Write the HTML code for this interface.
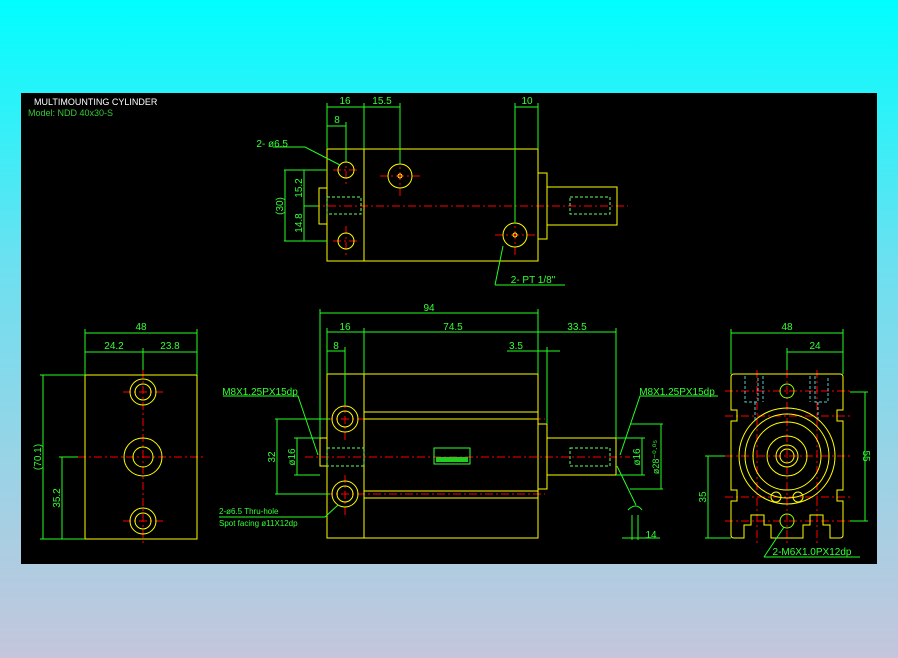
<!DOCTYPE html>
<html><head><style>
html,body{margin:0;padding:0;width:898px;height:658px;overflow:hidden;background:linear-gradient(#00feff 0%,#6ce0f0 40%,#c4c6dc 100%);}
svg{position:absolute;left:0;top:0}
text{font-family:"Liberation Sans",sans-serif;}
</style></head><body>
<svg width="898" height="658" viewBox="0 0 898 658">
<rect x="21" y="93" width="856" height="471" fill="#000"/>
<text x="34" y="105" fill="#fff" font-size="9">MULTIMOUNTING CYLINDER</text>
<text x="28" y="116" fill="#3c3" font-size="9">Model: NDD 40x30-S</text>

<g fill="none" stroke="#ff0000" stroke-width="1" stroke-dasharray="8,3,2,3">
<!-- top view centerlines -->
<line x1="312" y1="206" x2="628" y2="206"/>
<line x1="333" y1="170" x2="360" y2="170"/><line x1="346" y1="155" x2="346" y2="185"/>
<line x1="333" y1="241" x2="360" y2="241"/><line x1="346" y1="226" x2="346" y2="256"/>
<line x1="380" y1="176" x2="420" y2="176"/><line x1="400" y1="156" x2="400" y2="196"/>
<line x1="495" y1="235" x2="535" y2="235"/><line x1="515" y1="215" x2="515" y2="255"/>
<!-- front view -->
<line x1="305" y1="457" x2="630" y2="457"/>
<line x1="325" y1="419" x2="545" y2="419"/><line x1="345" y1="400" x2="345" y2="440"/>
<line x1="325" y1="494" x2="545" y2="494"/><line x1="345" y1="475" x2="345" y2="515"/>
<!-- left view -->
<line x1="78" y1="457" x2="205" y2="457"/><line x1="143" y1="370" x2="143" y2="545"/>
<line x1="123" y1="392" x2="163" y2="392"/><line x1="123" y1="521" x2="163" y2="521"/>
<!-- right view -->
<line x1="725" y1="456" x2="850" y2="456"/><line x1="787" y1="370" x2="787" y2="545"/>
<line x1="725" y1="391" x2="850" y2="391"/><line x1="725" y1="521" x2="850" y2="521"/>
<line x1="725" y1="416" x2="850" y2="416"/><line x1="725" y1="497" x2="850" y2="497"/>
<line x1="757" y1="370" x2="757" y2="545"/><line x1="817" y1="370" x2="817" y2="545"/>
</g>

<g fill="none" stroke="#ffff00" stroke-width="1">
<!-- top view -->
<rect x="327" y="149" width="37" height="112"/>
<rect x="364" y="149" width="174" height="112"/>
<rect x="538" y="173" width="9" height="66"/>
<rect x="547" y="187" width="70" height="38"/>
<rect x="319" y="188" width="8" height="36"/>
<circle cx="346" cy="170" r="8"/><circle cx="346" cy="241" r="8"/>
<circle cx="400" cy="176" r="12"/><circle cx="400" cy="176" r="2"/>
<circle cx="515" cy="235" r="12"/><circle cx="515" cy="235" r="2"/>
<!-- front view -->
<rect x="327" y="374" width="37" height="164"/>
<rect x="364" y="374" width="174" height="164"/>
<rect x="538" y="424" width="9" height="65"/>
<rect x="547" y="438" width="69" height="37"/>
<rect x="320" y="438" width="7" height="28"/>
<line x1="364" y1="412" x2="538" y2="412"/><line x1="364" y1="419" x2="538" y2="419"/>
<line x1="364" y1="491" x2="538" y2="491"/><line x1="364" y1="498" x2="538" y2="498"/>
<circle cx="345" cy="419" r="13"/><circle cx="345" cy="419" r="8"/>
<circle cx="345" cy="494" r="13"/><circle cx="345" cy="494" r="8"/>
<!-- left view -->
<rect x="85" y="375" width="112" height="164"/>
<circle cx="143" cy="392" r="13"/><circle cx="143" cy="392" r="8"/>
<circle cx="143" cy="457" r="19"/><circle cx="143" cy="457" r="10"/>
<circle cx="143" cy="521" r="13"/><circle cx="143" cy="521" r="8"/>
<!-- right view -->
<path d="M734 374 H840 Q843 374 843 377 V410 H837 V421 H843 V490 H837 V501 H843 V535 Q843 538 840 538 H830 V525 H823 V515 H810 V525 H803 V538 H771 V525 H764 V515 H751 V525 H744 V538 H734 Q731 538 731 535 V501 H737 V490 H731 V421 H737 V410 H731 V377 Q731 374 734 374 Z"/>
<circle cx="787" cy="456" r="48"/><circle cx="787" cy="456" r="42"/>
<circle cx="787" cy="456" r="34"/><circle cx="787" cy="456" r="20"/>
<circle cx="787" cy="456" r="11"/><circle cx="787" cy="456" r="7"/>
<circle cx="787" cy="391" r="7" stroke="#9f0"/><circle cx="787" cy="521" r="7" stroke="#9f0"/>
<circle cx="776" cy="497" r="5"/><circle cx="798" cy="497" r="5"/>
</g>

<g fill="none" stroke="#5cc" stroke-width="1" stroke-dasharray="3,2">
<path d="M745 376 V402 H758 V376 M763 376 V402 M755 402 V420"/>
<path d="M815 376 V402 H828 V376 M810 376 V402 M818 402 V420"/>
</g>
<g fill="none" stroke="#6f6" stroke-width="1" stroke-dasharray="3,2">
<rect x="327" y="197" width="34" height="17"/>
<rect x="570" y="197" width="40" height="17"/>
<rect x="327" y="448" width="37" height="18"/>
<rect x="570" y="448" width="40" height="18"/>
</g>

<g fill="none" stroke="#2f2" stroke-width="1">
<!-- top view dims -->
<line x1="327" y1="107" x2="400" y2="107"/><line x1="327" y1="103" x2="327" y2="149"/>
<line x1="364" y1="103" x2="364" y2="149"/><line x1="400" y1="103" x2="400" y2="164"/>
<line x1="327" y1="126" x2="346" y2="126"/><line x1="346" y1="122" x2="346" y2="162"/>
<line x1="515" y1="107" x2="538" y2="107"/><line x1="515" y1="103" x2="515" y2="223"/><line x1="538" y1="103" x2="538" y2="149"/>
<line x1="284" y1="170" x2="327" y2="170"/><line x1="284" y1="241" x2="327" y2="241"/>
<line x1="285" y1="170" x2="285" y2="241"/><line x1="304" y1="170" x2="304" y2="241"/>
<line x1="304" y1="206" x2="318" y2="206"/>
<path d="M273 147 H305 L340 165"/>
<path d="M495 285 L503 246 M495 285 H565"/>
<!-- front dims -->
<line x1="320" y1="313" x2="538" y2="313"/><line x1="320" y1="309" x2="320" y2="438"/>
<line x1="327" y1="332" x2="616" y2="332"/><line x1="327" y1="328" x2="327" y2="374"/><line x1="364" y1="328" x2="364" y2="374"/>
<line x1="538" y1="309" x2="538" y2="374"/><line x1="616" y1="328" x2="616" y2="438"/>
<line x1="327" y1="351" x2="345" y2="351"/><line x1="345" y1="347" x2="345" y2="405"/>
<line x1="507" y1="351" x2="560" y2="351"/><line x1="547" y1="347" x2="547" y2="424"/>
<line x1="275" y1="419" x2="330" y2="419"/><line x1="275" y1="494" x2="330" y2="494"/>
<line x1="277" y1="419" x2="277" y2="494"/>
<line x1="294" y1="438" x2="320" y2="438"/><line x1="294" y1="475" x2="320" y2="475"/><line x1="297" y1="438" x2="297" y2="475"/>
<line x1="616" y1="438" x2="645" y2="438"/><line x1="616" y1="475" x2="645" y2="475"/><line x1="642" y1="438" x2="642" y2="475"/>
<line x1="630" y1="424" x2="663" y2="424"/><line x1="630" y1="489" x2="663" y2="489"/><line x1="661" y1="424" x2="661" y2="489"/>
<path d="M223 396 H298 L318 455"/>
<path d="M718 396 H640 L620 455"/>
<path d="M219 517 H325 L338 505"/>
<path d="M617 466 L636 505 M628 510 Q636 502 642 510 M632 515 V540 M638 515 V540 M622 538 H660"/>
<!-- left view dims -->
<line x1="85" y1="333" x2="197" y2="333"/><line x1="85" y1="329" x2="85" y2="375"/><line x1="197" y1="329" x2="197" y2="375"/>
<line x1="85" y1="352" x2="197" y2="352"/><line x1="143" y1="348" x2="143" y2="370"/>
<line x1="40" y1="375" x2="85" y2="375"/><line x1="40" y1="539" x2="85" y2="539"/><line x1="43" y1="375" x2="43" y2="539"/>
<line x1="59" y1="457" x2="78" y2="457"/><line x1="62" y1="457" x2="62" y2="539"/>
<!-- right view dims -->
<line x1="731" y1="333" x2="843" y2="333"/><line x1="731" y1="329" x2="731" y2="374"/><line x1="843" y1="329" x2="843" y2="374"/>
<line x1="787" y1="352" x2="843" y2="352"/><line x1="787" y1="348" x2="787" y2="370"/>
<line x1="850" y1="392" x2="868" y2="392"/><line x1="850" y1="521" x2="868" y2="521"/><line x1="865" y1="392" x2="865" y2="521"/>
<line x1="705" y1="456" x2="725" y2="456"/><line x1="705" y1="538" x2="731" y2="538"/><line x1="708" y1="456" x2="708" y2="538"/>
<path d="M764 557 L784 527 M764 557 H860"/>
</g>
<rect x="434" y="448" width="36" height="16" fill="none" stroke="#3f3"/>
<rect x="436" y="457" width="32" height="5" fill="#2c2"/>

<g fill="#3f3" font-size="10" text-anchor="middle">
<text x="345" y="104">16</text><text x="382" y="104">15.5</text><text x="527" y="104">10</text><text x="337" y="123">8</text>
<text x="288" y="147" text-anchor="end">2- ø6.5</text>
<text x="533" y="283">2- PT 1/8"</text>
<text transform="translate(283,206) rotate(-90)">(30)</text>
<text transform="translate(302,188) rotate(-90)">15.2</text>
<text transform="translate(302,223) rotate(-90)">14.8</text>
<text x="429" y="311">94</text><text x="345" y="330">16</text><text x="453" y="330">74.5</text><text x="577" y="330">33.5</text>
<text x="336" y="349">8</text><text x="516" y="349">3.5</text>
<text x="260" y="395">M8X1.25PX15dp</text><text x="677" y="395">M8X1.25PX15dp</text>
<text transform="translate(275,457) rotate(-90)">32</text>
<text transform="translate(295,457) rotate(-90)">ø16</text>
<text transform="translate(640,457) rotate(-90)">ø16</text>
<text transform="translate(659,457) rotate(-90)" font-size="9">ø28⁻⁰·⁰⁵</text>
<text x="651" y="538">14</text>
<text x="141" y="330">48</text><text x="114" y="349">24.2</text><text x="170" y="349">23.8</text>
<text transform="translate(41,457) rotate(-90)">(70.1)</text>
<text transform="translate(60,498) rotate(-90)">35.2</text>
<text x="787" y="330">48</text><text x="815" y="349">24</text>
<text transform="translate(863,456) rotate(90)">55</text>
<text transform="translate(706,497) rotate(-90)">35</text>
<text x="812" y="555">2-M6X1.0PX12dp</text>
</g>
<g fill="#3f3" font-size="8">
<text x="219" y="514">2-ø6.5 Thru-hole</text>
<text x="219" y="526">Spot facing ø11X12dp</text>
</g>
</svg>
</body></html>
